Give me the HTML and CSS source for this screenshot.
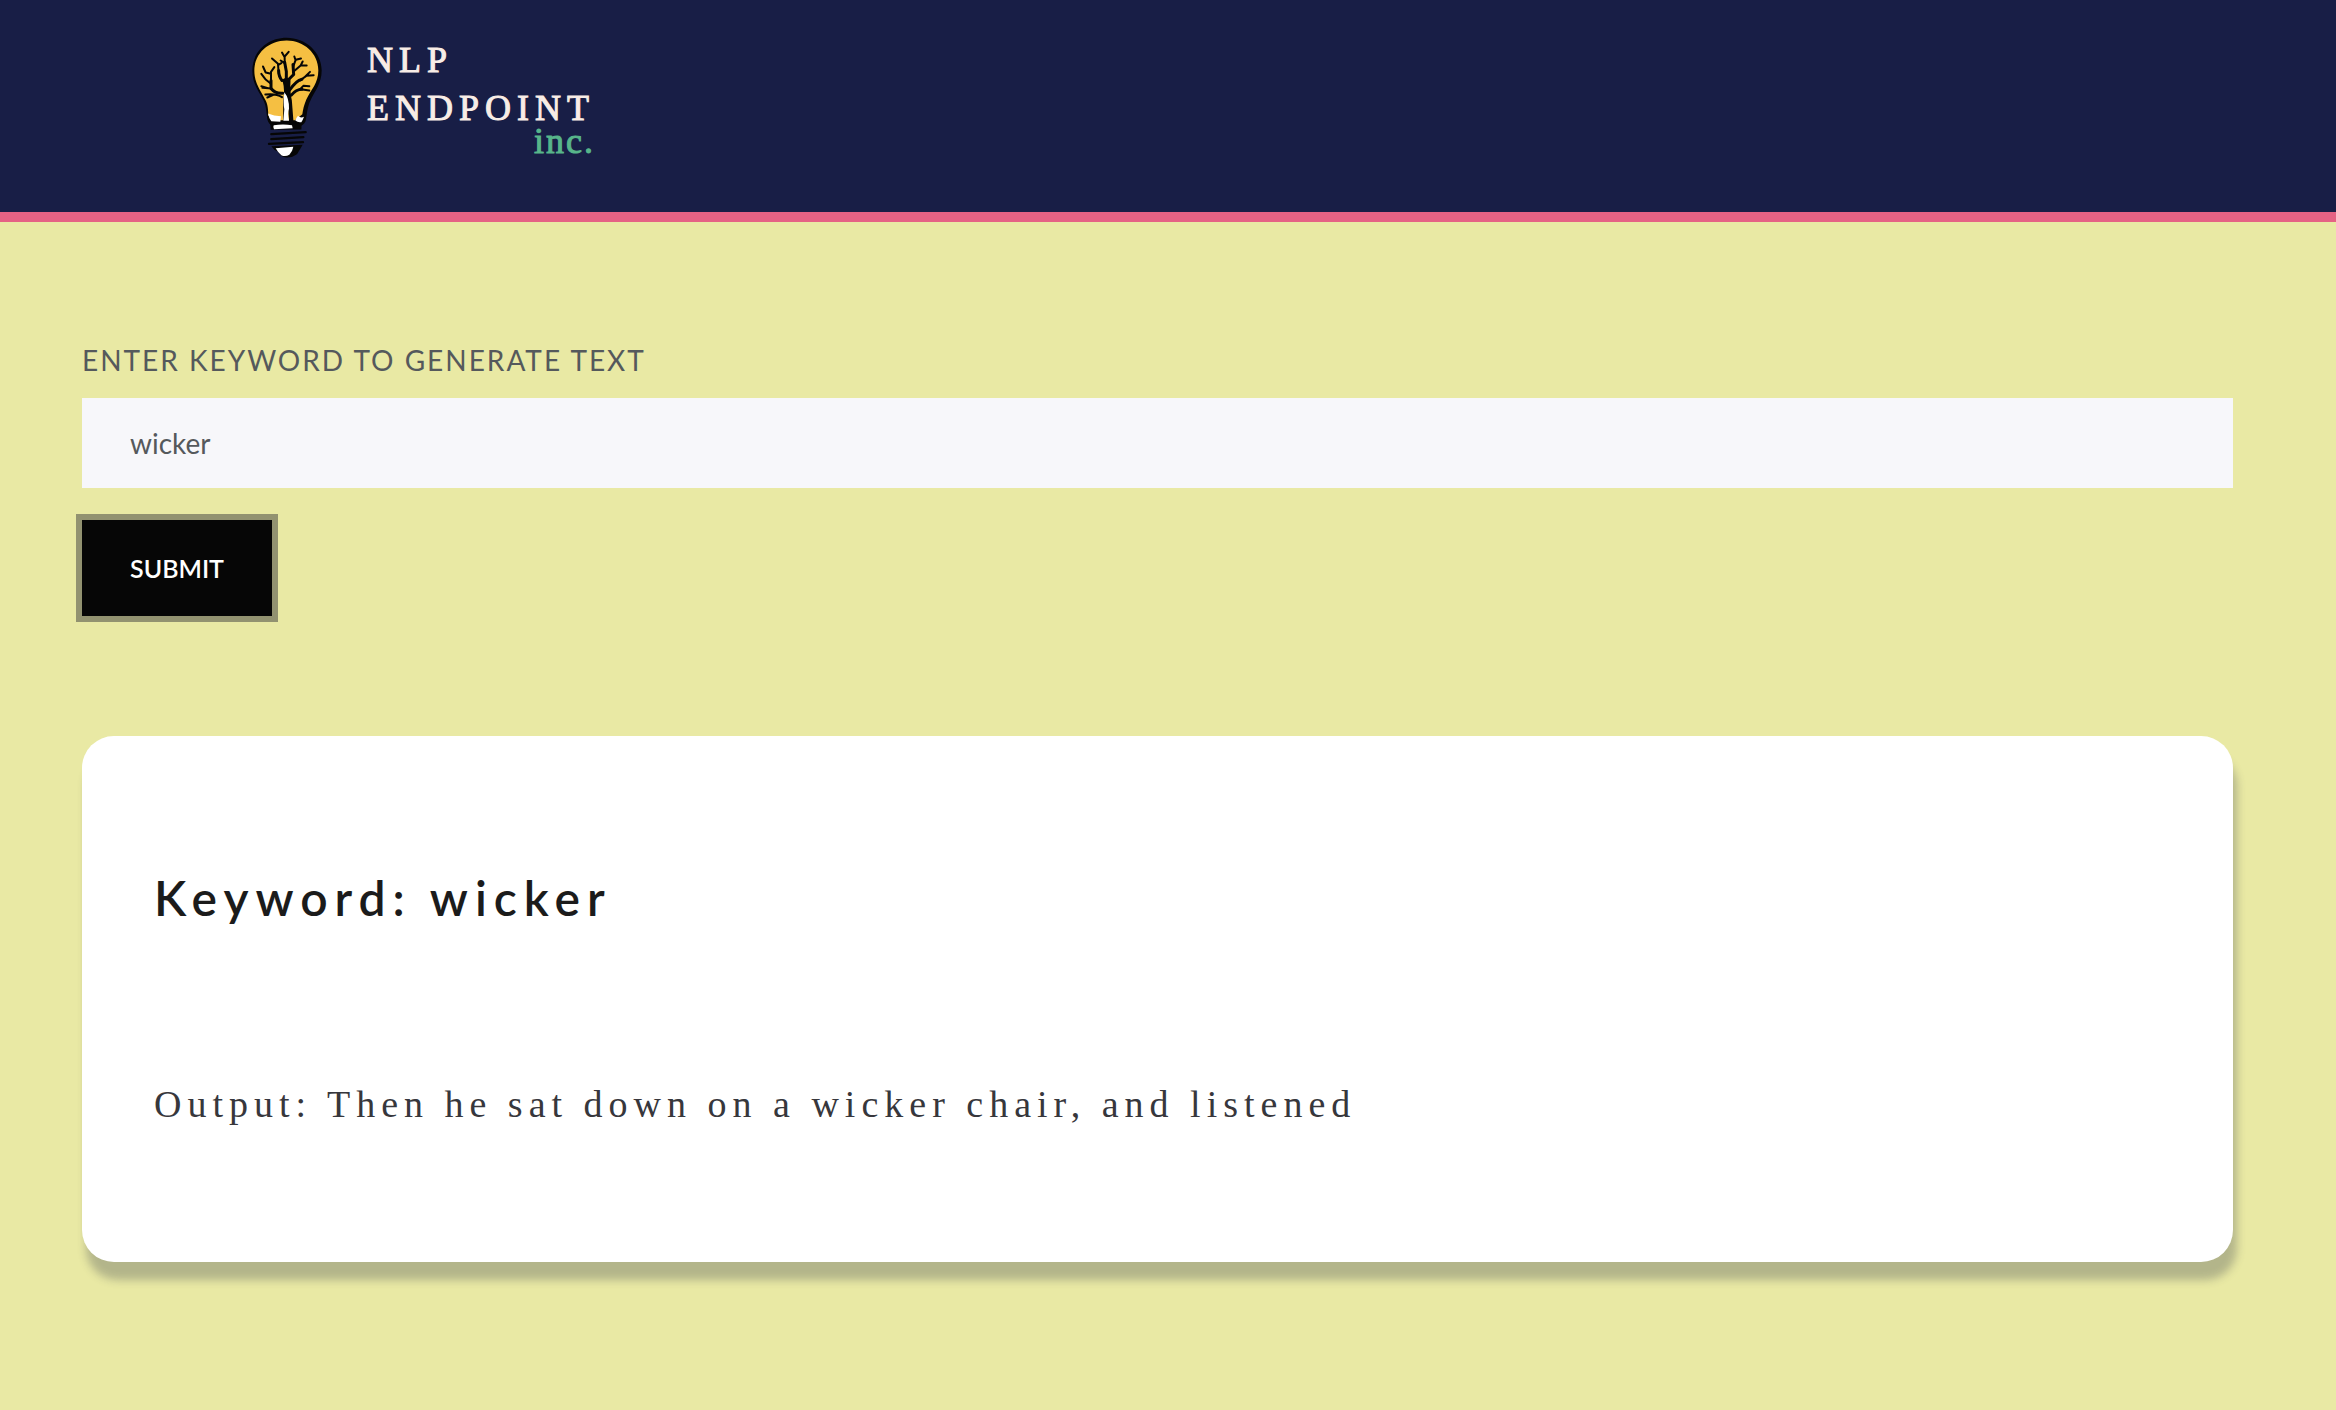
FILE: index.html
```html
<!DOCTYPE html>
<html lang="en">
<head>
  <meta charset="utf-8">
  <meta name="viewport" content="width=device-width, initial-scale=1">
  <title>NLP Endpoint inc.</title>
  <link rel="stylesheet" href="styles.css">
</head>
<body>
  <header class="site-header">
    <a class="brand" href="#">
      <svg class="brand-mark" viewBox="36 21 210 363" aria-hidden="true">
        <path d="M140 22C82 22 37 64 37 120c0 42 20 62 34 91 8 18 8 32 11 55 2 10 8 17 16 20h85c8-4 14-10 15-20 4-24 5-38 13-55 13-29 34-52 34-91 0-56-49-98-105-98z" fill="#060606"/>
        <path d="M140 30C87 30 43 68 43 120c0 40 20 60 34 90 7 14 7 26 8 46l32 13h48l22-18c2-14 5-28 12-44 14-30 36-48 36-87 0-52-44-90-95-90z" fill="#f5bf42"/>
        <path d="M84 249q18 8 39 8l-2 17-27-2q-7-7-10-23zM166 270q3-8 8-14 7 8 18 3-3 9-8 16-10 2-18-5z" fill="#fff"/>
        <g fill="none" stroke="#060606" stroke-linecap="round" stroke-linejoin="round">
          <path d="M134 150q8 28 2 65v60M145 150q-2 36 4 60 3 38 5 64" stroke-width="13"/>
          <path d="M139 165v-42l-5-28M143 150l18-18-2-30M148 180q20-30 38-34M128 188q-22 2-35-14V150M126 150q-10-12-10-30M154 194q14-18 32-18" stroke-width="9"/>
          <path d="M134 96v-18l12-14M134 80l-8-14M134 98l-12-8M159 110l8-22 16-4M167 90l-4-12M160 124l22-19h18M182 105l6-12M93 160l-17-14M93 152v-28l10-14M93 130l-16-4-8-18M76 146l-12-16M95 174l-28-2M84 173l-20-6M116 128l-2-28-18-16M114 104l10-6M180 150l19-14 22-2M196 138l14-14M182 176l26 4M178 178l12-12 18 1M126 200q-18-12-50-8M100 193l-18 8" stroke-width="6"/>
        </g>
        <path d="M133 185q-4 32 0 51l-3 35h17q-5-22 0-36 1-32-14-50z" fill="#fff"/>
        <path d="M91 280h94l-1 17-92 1z" fill="#060606"/>
        <path d="M101 284q28-4 55 0l2 9-56 3q-4-6-1-12z" fill="#fff"/>
        <g stroke="#060606" stroke-width="7" stroke-linecap="round">
          <path d="M94 311l103-6M94 326l96-6M87 340l102-5"/>
        </g>
        <path d="M94 347l94-4q-9 16-17 28-15 11-32 10-17-2-27-19-10-3-18-15z" fill="#060606"/>
        <path d="M107 353l53-4q-3 16-12 24-13 7-24 1-9-7-17-21z" fill="#fff"/>
      </svg>
      <span class="brand-name">
        <span>NLP</span>
        <span>ENDPOINT</span>
        <span class="brand-suffix">inc.</span>
      </span>
    </a>
  </header>

  <main class="page">
    <form class="keyword-form">
      <label class="keyword-label" for="keyword">ENTER KEYWORD TO GENERATE TEXT</label>
      <input class="keyword-input" id="keyword" name="keyword" type="text" value="wicker">
      <button class="submit-button" type="button">SUBMIT</button>
    </form>

    <section class="result">
      <h1 class="result-title">Keyword: wicker</h1>
      <p class="result-output">Output: Then he sat down on a wicker chair, and listened</p>
    </section>
  </main>
</body>
</html>
```

FILE: styles.css
```css
* {
  box-sizing: border-box;
}

body {
  margin: 0;
  background: #e9e9a4;
  color: #55595c;
  font-family: Lato, "Noto Sans", sans-serif;
}

.site-header {
  display: flex;
  padding: 36px 252px 52px;
  background: #181e46;
  border-bottom: 10px solid #e56284;
}

.brand {
  display: flex;
  align-items: flex-start;
  gap: 45px;
  color: #f8ede6;
  text-decoration: none;
}

.brand-mark {
  width: 70px;
  height: 124px;
}

.brand-name {
  display: flex;
  flex-direction: column;
  font-family: "Liberation Serif", serif;
  font-size: 36px;
  line-height: 48px;
  letter-spacing: 6px;
  -webkit-text-stroke: 1px currentColor;
}

.brand-suffix {
  align-self: flex-end;
  color: #57b58a;
  line-height: 18px;
  letter-spacing: 2px;
}

.page {
  padding: 118px 103px 100px 82px;
}

.keyword-form {
  display: flex;
  flex-direction: column;
  align-items: flex-start;
}

.keyword-label {
  margin-bottom: 18px;
  font-size: 28px;
  line-height: 40px;
  letter-spacing: 2px;
}

.keyword-input {
  width: 100%;
  height: 90px;
  padding: 0 48px;
  border: 0;
  border-radius: 0;
  outline: 0;
  background: #f7f7fa;
  color: inherit;
  font: inherit;
  font-size: 28px;
}

.submit-button {
  margin-top: 32px;
  padding: 32px 48px;
  border: 0;
  background: #060606;
  box-shadow: 0 0 0 6px #929270;
  color: #fff;
  font: inherit;
  font-size: 25px;
  font-weight: 600;
  line-height: 32px;
}

.result {
  margin-top: 120px;
  padding: 126px 72px 115px;
  border-radius: 32px;
  background: #fff;
  box-shadow: 4px 18px 8px rgba(56, 62, 80, 0.3);
}

.result-title {
  margin: 0 0 127px;
  color: #1b1b1b;
  font-size: 48px;
  font-weight: 600;
  line-height: 72px;
  letter-spacing: 7px;
}

.result-output {
  margin: 0;
  color: #37373c;
  font-family: "Liberation Serif", serif;
  font-size: 38px;
  line-height: 86px;
  letter-spacing: 6px;
}
```
